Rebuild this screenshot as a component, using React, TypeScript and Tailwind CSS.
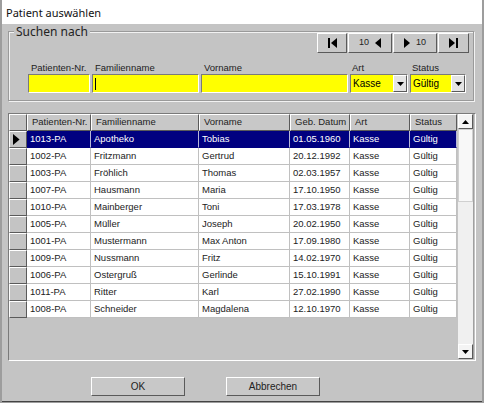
import React from "react";

const rows: string[][] = [
  ["1013-PA", "Apotheko", "Tobias", "01.05.1960"],
  ["1002-PA", "Fritzmann", "Gertrud", "20.12.1992"],
  ["1003-PA", "Fröhlich", "Thomas", "02.03.1957"],
  ["1007-PA", "Hausmann", "Maria", "17.10.1950"],
  ["1010-PA", "Mainberger", "Toni", "17.03.1978"],
  ["1005-PA", "Müller", "Joseph", "20.02.1950"],
  ["1001-PA", "Mustermann", "Max Anton", "17.09.1980"],
  ["1009-PA", "Nussmann", "Fritz", "14.02.1970"],
  ["1006-PA", "Ostergruß", "Gerlinde", "15.10.1991"],
  ["1011-PA", "Ritter", "Karl", "27.02.1990"],
  ["1008-PA", "Schneider", "Magdalena", "12.10.1970"],
];

const raised =
  "border border-t-white border-l-white border-b-[#5a5a5a] border-r-[#5a5a5a]";
const sunken =
  "border border-t-[#7a7a7a] border-l-[#7a7a7a] border-b-white border-r-white";

function TriLeft({ size = 8 }: { size?: number }) {
  return (
    <svg width={size * 0.6} height={size} viewBox="0 0 6 10">
      <polygon points="6,0 6,10 0,5" fill="#000" />
    </svg>
  );
}
function TriRight({ size = 8 }: { size?: number }) {
  return (
    <svg width={size * 0.6} height={size} viewBox="0 0 6 10">
      <polygon points="0,0 0,10 6,5" fill="#000" />
    </svg>
  );
}
function TriDown() {
  return (
    <svg width="7" height="4" viewBox="0 0 7 4">
      <polygon points="0,0 7,0 3.5,4" fill="#000" />
    </svg>
  );
}
function TriUp() {
  return (
    <svg width="7" height="4" viewBox="0 0 7 4">
      <polygon points="0,4 7,4 3.5,0" fill="#000" />
    </svg>
  );
}

function Field({
  label,
  w,
  caret,
}: {
  label: string;
  w: string;
  caret?: boolean;
}) {
  return (
    <div className="flex flex-col">
      <div className="h-[11px] leading-[11px] pl-[3px] text-[9.5px] text-[#222]">{label}</div>
      <div className={`mt-[1px] h-[19px] ${w} bg-[#ffff00] ${sunken} flex items-center pl-[2px]`}>
        {caret && <div className="w-[1px] h-[12px] bg-black" />}
      </div>
    </div>
  );
}

function SelectField({
  label,
  value,
  w,
}: {
  label: string;
  value: string;
  w: string;
}) {
  return (
    <div className="flex flex-col">
      <div className="h-[11px] leading-[11px] pl-[2px] text-[9.5px] text-[#222]">{label}</div>
      <div className={`mt-[1px] h-[19px] ${w} bg-[#ffff00] ${sunken} flex items-stretch`}>
        <div className="flex-1 flex items-center pl-[2px] text-[10px] text-black">{value}</div>
        <div className={`w-[14px] bg-[#e4e4e4] ${raised} flex items-center justify-center`}>
          <TriDown />
        </div>
      </div>
    </div>
  );
}

export default function App() {
  const cols = "grid grid-cols-[18px_64px_108px_91px_60px_60px_47px]";
  return (
    <div
      className="w-[484px] h-[403px] bg-[#9d9d9d] pl-[2px] pr-[2px] pb-[1px] flex flex-col"
      style={{ fontFamily: '"Liberation Sans", Arial, sans-serif' }}
    >
      <div
        className="h-[24px] bg-white flex items-center pl-[4px] pt-[3px] text-[11px] text-[#111] shrink-0"
        style={{ fontFamily: '"Noto Sans", "Open Sans", sans-serif' }}
      >
        Patient auswählen
      </div>
      <div className="flex-1 bg-[#c4c4c4] flex flex-col border-b border-b-[#444]">
        {/* Search group */}
        <div className="relative mt-[7px] ml-[6px] w-[466px] h-[70px] border border-[#9a9a9a] shadow-[inset_1px_1px_0_#f2f2f2,1px_1px_0_#f2f2f2] flex flex-col">
          <div
            className="absolute -top-[8px] left-[5px] px-[2px] bg-[#c4c4c4] text-[12px] leading-[16px] text-[#222]"
            style={{ fontFamily: '"Noto Sans", "Open Sans", sans-serif' }}
          >
            Suchen nach
          </div>
          <div className="flex justify-end pr-[4px] pt-[1px] gap-[1px]">
            <div className={`w-[30px] h-[20px] bg-[#c8c8c8] ${raised} flex items-center justify-center gap-[1px]`}>
              <div className="w-[2px] h-[10px] bg-black" />
              <TriLeft size={10} />
            </div>
            <div className={`w-[44px] h-[20px] bg-[#c8c8c8] ${raised} flex items-center justify-center gap-[6px] text-[9px] text-[#222]`}>
              <span>10</span>
              <TriLeft size={10} />
            </div>
            <div className={`w-[44px] h-[20px] bg-[#c8c8c8] ${raised} flex items-center justify-center gap-[6px] text-[9px] text-[#222]`}>
              <TriRight size={10} />
              <span>10</span>
            </div>
            <div className={`w-[31px] h-[20px] bg-[#c8c8c8] ${raised} flex items-center justify-center gap-[1px]`}>
              <TriRight size={10} />
              <div className="w-[2px] h-[10px] bg-black" />
            </div>
          </div>
          <div className="flex pl-[19px] mt-[9px] gap-[2px]">
            <Field label="Patienten-Nr." w="w-[62px]" />
            <Field label="Familienname" w="w-[107px]" caret />
            <Field label="Vorname" w="w-[147px]" />
            <SelectField label="Art" value="Kasse" w="w-[58px]" />
            <SelectField label="Status" value="Gültig" w="w-[56px]" />
          </div>
        </div>

        {/* Table */}
        <div className="mt-[12px] ml-[6px] w-[468px] h-[248px] border border-t-[#7a7a7a] border-l-[#7a7a7a] border-b-white border-r-white flex">
          <div className="flex flex-col">
            <div className={`${cols} h-[17px] text-[9.5px] text-[#222]`}>
              <div className={`bg-[#c4c4c4] ${raised}`} />
              {["Patienten-Nr.", "Familienname", "Vorname", "Geb. Datum", "Art", "Status"].map((h) => (
                <div key={h} className={`bg-[#c8c8c8] ${raised} flex items-center pl-[4px] whitespace-nowrap overflow-hidden`}>
                  {h}
                </div>
              ))}
            </div>
            {rows.map((r, i) => {
              const sel = i === 0;
              const cell = sel
                ? "bg-[#000080] text-white border-r border-b border-r-[#b8b8d8] border-b-[#000080]"
                : "bg-white text-[#222] border-r border-b border-[#c0c0c0]";
              return (
                <div key={r[0]} className={`${cols} h-[17px] text-[9.5px]`}>
                  <div className={`bg-[#c4c4c4] ${raised} flex items-center pl-[3px]`}>
                    {sel && <TriRight size={11} />}
                  </div>
                  {[r[0], r[1], r[2], r[3], "Kasse", "Gültig"].map((c, j) => (
                    <div key={j} className={`${cell} flex items-center pl-[3px] whitespace-nowrap overflow-hidden`}>
                      {c}
                    </div>
                  ))}
                </div>
              );
            })}
          </div>
          {/* Scrollbar */}
          <div className="ml-[1px] w-[16px] h-[245px] bg-[#f0f0f0] flex flex-col border-r border-r-[#a0a0a0]">
            <div className={`h-[15px] bg-[#f4f4f4] ${raised} flex items-center justify-center`}>
              <TriUp />
            </div>
            <div className="h-[73px] bg-[#f8f8f8] border border-[#d0d0d0]" />
            <div className="flex-1" />
            <div className={`h-[15px] bg-[#f4f4f4] ${raised} flex items-center justify-center`}>
              <TriDown />
            </div>
          </div>
        </div>

        {/* Buttons */}
        <div className="flex mt-[16px] pl-[89px] gap-[41px]">
          <div className={`w-[94px] h-[19px] bg-[#c8c8c8] ${raised} flex items-center justify-center text-[10px] text-[#222]`}>
            OK
          </div>
          <div className={`w-[94px] h-[19px] bg-[#c8c8c8] ${raised} flex items-center justify-center text-[10px] text-[#222]`}>
            Abbrechen
          </div>
        </div>
      </div>
    </div>
  );
}
